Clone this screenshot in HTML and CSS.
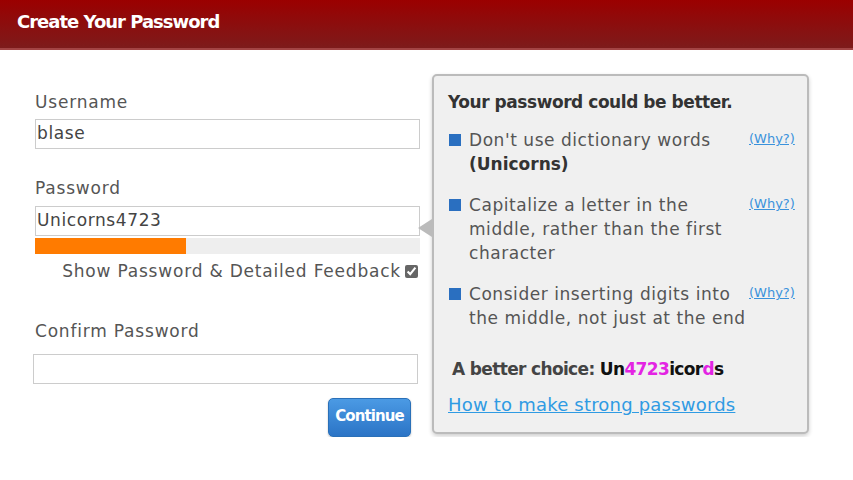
FILE: index.html
```html
<!DOCTYPE html>
<html lang="en">
<head>
    <meta charset="UTF-8">
    <meta name="viewport" content="width=device-width, initial-scale=1.0">
    <title>Create Your Password</title>
    <link rel="stylesheet" href="styles.css">
</head>

<body>
    <div class="header">Create Your Password</div>
    <div class="main">
        <form class="form">
            <p class="label">Username</p>
            <input class="field" type="text" value="blase">
            <p class="label pass">Password</p>
            <input class="field" type="text" value="Unicorns4723">
            <div class="meter"><div class="meter-fill" style="width: 151px"></div></div>
            <label class="show">Show Password &amp; Detailed Feedback <input type="checkbox" checked></label>
            <p class="label confirm">Confirm Password</p>
            <input class="field field-confirm" type="password">
            <div class="actions">
                <button class="continue" type="button">Continue</button>
            </div>
        </form>

        <div class="panel">
            <span class="arrow"></span>
            <h2 class="panel-title">Your password could be better.</h2>
            <ul class="tips">
                <li class="tip">
                    <span class="square"></span>
                    <span class="tip-text">Don't use dictionary words <b>(Unicorns)</b></span>
                    <a class="why" href="#">(Why?)</a>
                </li>
                <li class="tip">
                    <span class="square"></span>
                    <span class="tip-text">Capitalize a letter in the middle, rather than the first character</span>
                    <a class="why" href="#">(Why?)</a>
                </li>
                <li class="tip">
                    <span class="square"></span>
                    <span class="tip-text">Consider inserting digits into the middle, not just at the end</span>
                    <a class="why" href="#">(Why?)</a>
                </li>
            </ul>
            <p class="better">A better choice: <span class="choice">Un<span class="pink">4723</span>icor<span class="pink">d</span>s</span></p>
            <a class="howto" href="#">How to make strong passwords</a>
        </div>
    </div>
</body>
</html>
```

FILE: styles.css
```css
body{
    margin: 0;
    font-family: "DejaVu Sans", sans-serif;
    color: #555;
    background: white;
    letter-spacing: 0.55px;
}
.header{
    height: 50px;
    box-sizing: border-box;
    padding-left: 17px;
    line-height: 44px;
    font-size: 18px;
    font-weight: bold;
    letter-spacing: -1px;
    color: white;
    background: linear-gradient(#9b0000, #7d1b1b);
    border-bottom: 2px solid #a34444;
}
.main{
    display: flex;
    align-items: flex-start;
}
.form{
    width: 385px;
    margin-left: 35px;
    padding-top: 42px;
}
.label{
    margin: 0;
    font-size: 17px;
    line-height: 20px;
    letter-spacing: 0.8px;
    margin-bottom: 7px;
}
.pass{
    margin-top: 29px;
    margin-bottom: 8px;
}
.confirm{
    margin-top: 40px;
    margin-bottom: 13px;
}
.field{
    display: block;
    width: 385px;
    height: 30px;
    box-sizing: border-box;
    margin: 0;
    padding: 0 1px 2px;
    border: 1px solid #ccc;
    font-family: "DejaVu Sans", sans-serif;
    font-size: 17px;
    letter-spacing: 0.6px;
    color: #444;
}
.field-confirm{
    margin-left: -2px;
}
.meter{
    height: 16px;
    margin-top: 2px;
    background: #eee;
}
.meter-fill{
    height: 100%;
    background: #ff7b00;
}
.show{
    display: flex;
    justify-content: flex-end;
    align-items: center;
    gap: 4px;
    margin-top: 7px;
    height: 20px;
    font-size: 17px;
    letter-spacing: 0.8px;
}
.show input{
    width: 13px;
    height: 13px;
    margin: 0 2px 0 0;
    accent-color: #666;
}
.actions{
    display: flex;
    justify-content: flex-end;
    margin-top: 14px;
    margin-right: 9px;
}
.continue{
    width: 83px;
    height: 39px;
    padding: 0 0 4px;
    border: 1px solid #2a70b8;
    border-radius: 5px;
    background: linear-gradient(#4b9ae4, #2b74c6);
    color: white;
    font-family: "DejaVu Sans", sans-serif;
    font-size: 15px;
    font-weight: bold;
    letter-spacing: -0.9px;
    box-shadow: 0 1px 2px rgba(0,0,0,0.25);
}
.panel{
    position: relative;
    width: 377px;
    height: 360px;
    box-sizing: border-box;
    margin-top: 24px;
    margin-left: 12px;
    padding: 16px 13px 0 14px;
    background: #f0f0f0;
    border: 2px solid #bbb;
    border-radius: 5px;
    box-shadow: 0 2px 4px rgba(0,0,0,0.2);
}
.arrow{
    position: absolute;
    left: -16px;
    top: 143px;
    border-top: 9px solid transparent;
    border-bottom: 9px solid transparent;
    border-right: 14px solid #bbb;
}
.panel-title{
    margin: 0;
    font-size: 17px;
    line-height: 20px;
    letter-spacing: -0.45px;
    color: #333;
}
.tips{
    list-style: none;
    margin: 16px 0 0 0;
    padding: 0;
}
.tip{
    display: flex;
    align-items: flex-start;
    margin-bottom: 17px;
    font-size: 17px;
    line-height: 24px;
}
.square{
    flex: none;
    width: 12px;
    height: 12px;
    margin: 6px 8px 0 1px;
    background: #2a6fc0;
}
.tip-text{
    flex: none;
    width: 280px;
}
.tip-text b{
    color: #333;
    letter-spacing: 0;
}
.why{
    margin-left: auto;
    padding-top: 2px;
    font-size: 13px;
    line-height: 18px;
    letter-spacing: 0;
    color: #3a92dc;
}
.better{
    margin: 27px 0 0 4px;
    font-size: 17px;
    line-height: 24px;
    font-weight: bold;
    letter-spacing: -0.65px;
    color: #444;
}
.choice{
    color: #111;
}
.pink{
    color: #e324e3;
}
.howto{
    display: block;
    margin-top: 12px;
    font-size: 18px;
    line-height: 24px;
    letter-spacing: 0.2px;
    color: #2f9be3;
}
```
